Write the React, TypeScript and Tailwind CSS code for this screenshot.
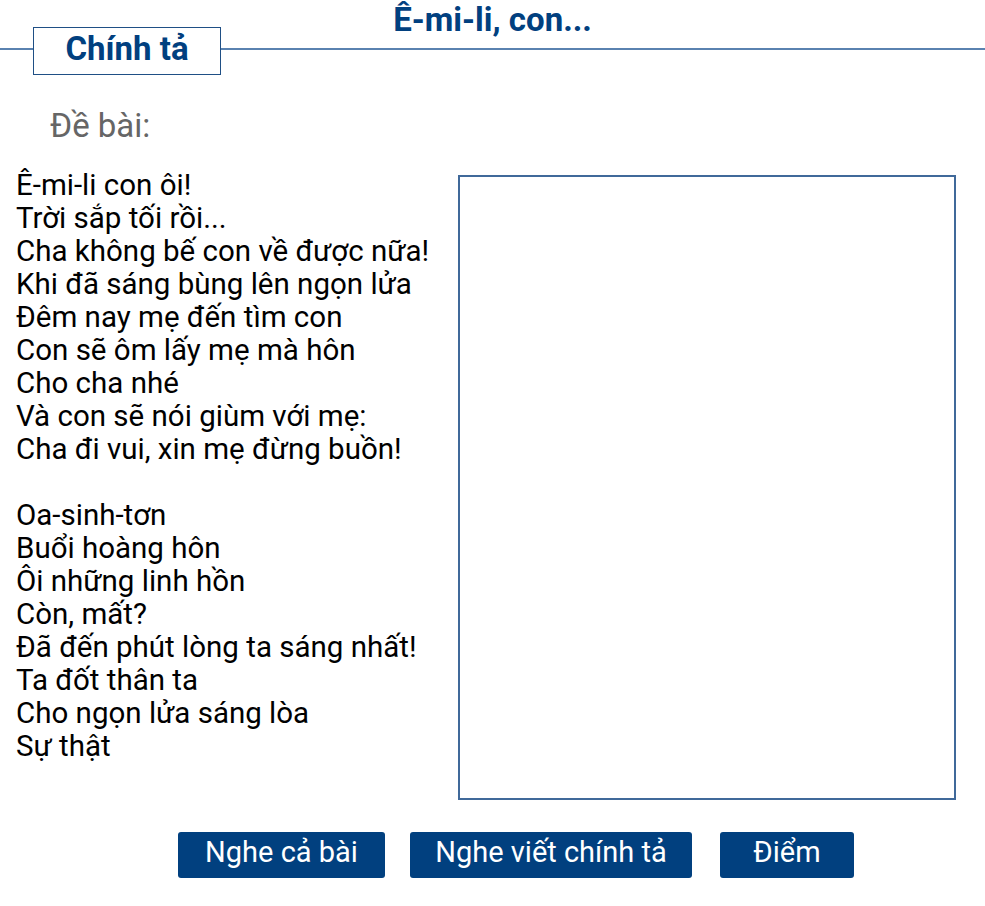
import React from 'react';

const stanzaOne = [
    'Ê-mi-li con ôi!',
    'Trời sắp tối rồi...',
    'Cha không bế con về được nữa!',
    'Khi đã sáng bùng lên ngọn lửa',
    'Đêm nay mẹ đến tìm con',
    'Con sẽ ôm lấy mẹ mà hôn',
    'Cho cha nhé',
    'Và con sẽ nói giùm với mẹ:',
    'Cha đi vui, xin mẹ đừng buồn!',
];

const stanzaTwo = [
    'Oa-sinh-tơn',
    'Buổi hoàng hôn',
    'Ôi những linh hồn',
    'Còn, mất?',
    'Đã đến phút lòng ta sáng nhất!',
    'Ta đốt thân ta',
    'Cho ngọn lửa sáng lòa',
    'Sự thật',
];

const Header: React.FC = () => (
    <div className="relative h-[76px]">
        <h1 className="absolute left-0 right-0 top-[3px] text-center text-[33px] leading-[34px] font-bold text-[#01407f]">
            Ê-mi-li, con...
        </h1>
        <div className="flex items-start pt-[27px]">
            <div className="w-[33px] mt-[21px] border-t-2 border-[#5a82b0]" />
            <div className="w-[188px] h-[48px] border border-[#1f4f85] bg-white flex items-center justify-center pb-[5px]">
                <span className="text-[33px] font-bold text-[#01407f] leading-none">Chính tả</span>
            </div>
            <div className="flex-1 mt-[21px] border-t-2 border-[#5a82b0]" />
        </div>
    </div>
);

export default function App() {
    return (
        <div className="w-[985px] min-h-[906px] bg-white" style={{ fontFamily: 'Roboto, "Noto Sans", sans-serif' }}>
            <Header />

            <div className="pl-[50px] pt-[30px] text-[33px] leading-[40px] text-[#666666]">Đề bài:</div>

            <div className="flex items-start pl-[16px] mt-[23px]">
                <div className="w-[442px] text-[29.5px] leading-[33px] text-black">
                    {stanzaOne.map((line) => (
                        <div key={line}>{line}</div>
                    ))}
                    <div className="h-[33px]" />
                    {stanzaTwo.map((line) => (
                        <div key={line}>{line}</div>
                    ))}
                </div>
                <div className="mt-[6px] w-[498px] h-[625px] border-2 border-[#40699a] bg-white" />
            </div>

            <div className="flex items-center pl-[178px] mt-[32px]">
                <button className="w-[207px] h-[46px] rounded-[3px] bg-[#01407f] text-white text-[29px] leading-none pb-[6px]">
                    Nghe cả bài
                </button>
                <button className="ml-[25px] w-[282px] h-[46px] rounded-[3px] bg-[#01407f] text-white text-[29px] leading-none pb-[6px]">
                    Nghe viết chính tả
                </button>
                <button className="ml-[28px] w-[134px] h-[46px] rounded-[3px] bg-[#01407f] text-white text-[29px] leading-none pb-[6px]">
                    Điểm
                </button>
            </div>
        </div>
    );
}
